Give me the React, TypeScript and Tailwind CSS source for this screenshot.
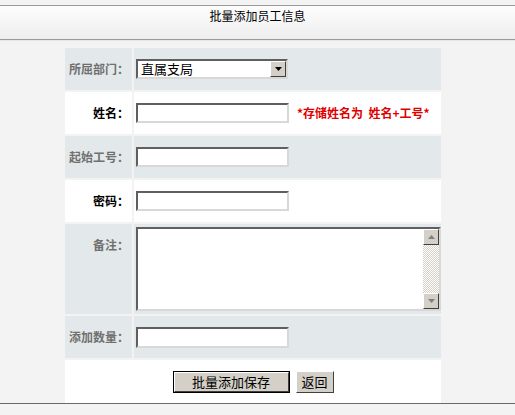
import React from 'react';

const font = { fontFamily: '"Noto Sans CJK SC", "Noto Sans", sans-serif' };

const Inset: React.FC<{ className?: string; children?: React.ReactNode }> = ({ className = '', children }) => (
  <div className={`border-2 border-t-[#5f5f5f] border-l-[#5f5f5f] border-b-[#d8d8d8] border-r-[#d8d8d8] bg-white ${className}`}>
    {children}
  </div>
);

const Arrow: React.FC<{ up?: boolean; color?: string }> = ({ up, color = '#000' }) => (
  <svg width="7" height="4" viewBox="0 0 7 4">
    <path d={up ? 'M0 4h7L3.5 0z' : 'M0 0h7L3.5 4z'} fill={color} />
  </svg>
);

const Row: React.FC<{ label: string; gray?: boolean; h?: string; children: React.ReactNode; top?: boolean }> = ({
  label,
  gray,
  h = 'h-[42px]',
  children,
  top,
}) => {
  const bg = gray ? 'bg-[#e3e9ea]' : 'bg-white';
  return (
    <>
      <div
        className={`${bg} ${h} flex ${top ? 'items-start pt-[12px]' : 'items-center'} justify-end pr-[3px] text-[12px] font-bold ${
          gray ? 'text-[#707070]' : 'text-black'
        }`}
      >
        {label}
      </div>
      <div className={`${bg} ${h} flex ${top ? 'items-start pt-[3px]' : 'items-center'} pl-[2px]`}>{children}</div>
    </>
  );
};

const App: React.FC = () => {
  return (
    <div className="w-[515px] h-[415px] bg-[#f3f3f3] overflow-hidden" style={font}>
      <div className="h-[5px]" />
      <div className="h-[35px] border-t border-b border-[#9a9a9a] bg-gradient-to-b from-[#fdfdfd] to-[#eeeeee] flex justify-center pt-[2px]">
        <span className="text-[12px] text-black leading-[16px]">批量添加员工信息</span>
      </div>
      <div className="h-[1px] bg-[#e6e6e6]" />
      <div className="ml-[65px] mt-[7px] w-[376px] grid grid-cols-[67px_307px] gap-[2px]">
        <Row label="所屈部门：" gray>
          <div className="w-[152px] h-[20px] border-2 border-t-[#5f5f5f] border-l-[#5f5f5f] border-b-[#d8d8d8] border-r-[#d8d8d8] bg-white flex items-center">
            <span className="flex-1 pl-[3px] text-[13px] leading-[16px] text-black">直属支局</span>
            <div className="w-[16px] h-[16px] bg-[#d4d0c8] border border-t-white border-l-white border-b-[#404040] border-r-[#404040] flex items-center justify-center">
              <Arrow />
            </div>
          </div>
        </Row>
        <Row label="姓名：">
          <Inset className="w-[153px] h-[20px]" />
          <span className="ml-[8px] text-[12px] font-bold text-[#e00000] whitespace-pre">*存储姓名为  姓名+工号*</span>
        </Row>
        <Row label="起始工号：" gray>
          <Inset className="w-[153px] h-[20px]" />
        </Row>
        <Row label="密码：">
          <Inset className="w-[153px] h-[20px]" />
        </Row>
        <Row label="备注：" gray h="h-[90px]" top>
          <Inset className="w-[306px] h-[84px] flex justify-end">
            <div className="w-[16px] h-full flex flex-col bg-[repeating-conic-gradient(#d4d0c8_0%_25%,#ffffff_0%_50%)] bg-[length:2px_2px]">
              <div className="w-[16px] h-[16px] bg-[#d4d0c8] border border-t-white border-l-white border-b-[#404040] border-r-[#404040] flex items-center justify-center">
                <Arrow up color="#808080" />
              </div>
              <div className="flex-1" />
              <div className="w-[16px] h-[16px] bg-[#d4d0c8] border border-t-white border-l-white border-b-[#404040] border-r-[#404040] flex items-center justify-center">
                <Arrow color="#808080" />
              </div>
            </div>
          </Inset>
        </Row>
        <Row label="添加数量：" gray>
          <Inset className="w-[153px] h-[21px]" />
        </Row>
        <div className="col-span-2 bg-white h-[43px] flex items-center justify-center gap-[6px]">
          <button className="w-[117px] h-[22px] border border-black bg-[#d4d0c8] p-0">
            <div className="w-full h-full border border-t-white border-l-white border-b-[#404040] border-r-[#404040] text-[13px] leading-[18px] text-black">
              批量添加保存
            </div>
          </button>
          <button className="w-[38px] h-[22px] bg-[#d4d0c8] border border-t-white border-l-white border-b-[#404040] border-r-[#404040] text-[13px] leading-[18px] text-black">
            返回
          </button>
        </div>
      </div>
      <div className="h-[1px] bg-[#6a6a6a]" />
    </div>
  );
};

export default App;
